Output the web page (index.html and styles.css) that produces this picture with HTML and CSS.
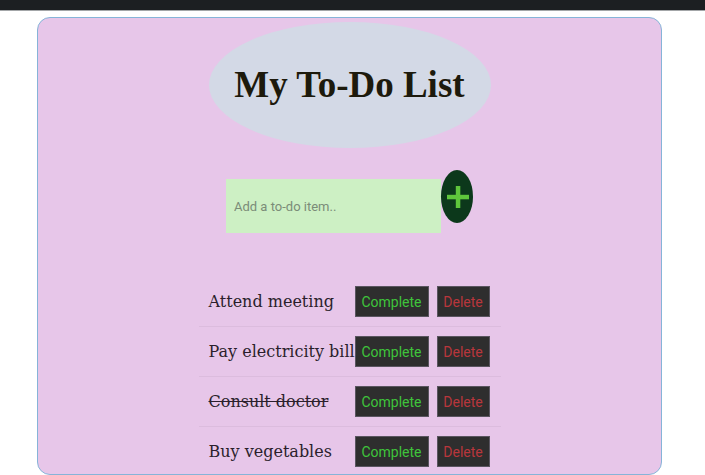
FILE: index.html
```html
<!DOCTYPE html>
<html>
<head>
<meta charset="utf-8">
<link rel="stylesheet" href="styles.css">
</head>
<body>
<div class="topbar"></div>
<div class="card">
  <div class="title-wrap"><h1 class="title">My To-Do List</h1></div>
  <div class="form">
    <input class="field" type="text" placeholder="Add a to-do item..">
    <button class="add" aria-label="Add">
      <svg width="22" height="22" viewBox="0 0 22 22"><rect x="8.8" y="0" width="4.5" height="22" fill="#5fc53c"/><rect x="0" y="8.8" width="22" height="4.5" fill="#5fc53c"/></svg>
    </button>
  </div>
  <ul class="list">
    <li class="item"><span class="text">Attend meeting</span><button class="btn complete">Complete</button><button class="btn delete">Delete</button></li>
    <li class="item"><span class="text">Pay electricity bill</span><button class="btn complete">Complete</button><button class="btn delete">Delete</button></li>
    <li class="item"><span class="text done">Consult doctor</span><button class="btn complete">Complete</button><button class="btn delete">Delete</button></li>
    <li class="item"><span class="text">Buy vegetables</span><button class="btn complete">Complete</button><button class="btn delete">Delete</button></li>
  </ul>
</div>
</body>
</html>
```
FILE: styles.css
```css
html, body {
  margin: 0;
  padding: 0;
  background: #ffffff;
  overflow: hidden;
  height: 475px;
}
.topbar {
  height: 10px;
  background: #1c1f22;
  border-bottom: 1px solid #a3a6a8;
}
.card {
  box-sizing: border-box;
  margin: 6px 0 0 37px;
  width: 625px;
  height: 458px;
  background: #e7c6e9;
  border: 1.5px solid #86b4d8;
  border-radius: 13px;
  display: flex;
  flex-direction: column;
  align-items: center;
  overflow: hidden;
}
.card > * {
  flex: none;
}
.title-wrap {
  margin-top: 4px;
  width: 282px;
  height: 126px;
  border-radius: 50%;
  background: #d3d9e6;
  display: flex;
  align-items: center;
  justify-content: center;
}
.title {
  margin: 0 0 2px;
  font-family: "Liberation Serif", serif;
  font-weight: bold;
  font-size: 37px;
  color: #1d1a0c;
}
.form {
  display: flex;
  align-items: flex-start;
  margin-top: 22px;
}
.field {
  box-sizing: border-box;
  margin-top: 9px;
  width: 215px;
  height: 54px;
  border: none;
  outline: none;
  background: #cdf0c4;
  padding: 0 8px;
  font-family: Roboto, sans-serif;
  font-size: 13px;
  color: #333;
}
.field::placeholder {
  color: #7b8c78;
}
.add {
  width: 32px;
  height: 53px;
  border: none;
  border-radius: 50%;
  background: #0c381b;
  padding: 0;
  display: flex;
  align-items: center;
  justify-content: center;
}
.add svg { display: block; margin-left: 1px; }
.list {
  list-style: none;
  margin: 44px 0 0;
  padding: 0;
  width: 302px;
}
.item {
  display: flex;
  align-items: center;
  padding: 9px 10px;
  border-bottom: 1px solid #dcbcde;
}
.text {
  width: 146px;
  flex: none;
  white-space: nowrap;
  font-family: "DejaVu Serif", serif;
  font-size: 16px;
  color: #2b1f2c;
}
.text.done {
  text-decoration: line-through;
}
.btn {
  box-sizing: border-box;
  height: 31px;
  border: 1px solid #5a5560;
  background: #2e2e2e;
  font-family: Roboto, sans-serif;
  font-size: 14px;
  padding: 0;
}
.complete {
  width: 74px;
  color: #3fc43b;
}
.delete {
  width: 53px;
  margin-left: 8px;
  color: #b9363c;
}
```
